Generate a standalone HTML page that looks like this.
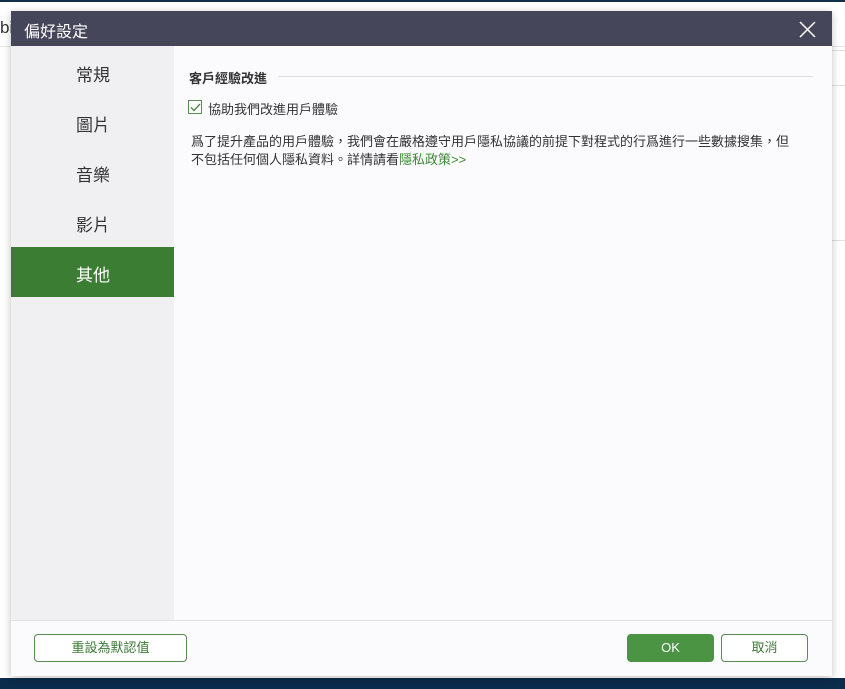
<!DOCTYPE html>
<html><head><meta charset="utf-8"><style>
*{margin:0;padding:0;box-sizing:border-box}
body{width:845px;height:689px;overflow:hidden;background:#fff;position:relative;font-family:"Liberation Sans","Noto Sans CJK TC",sans-serif}
.abs{position:absolute}
</style></head><body>
<div class="abs" style="left:0;top:0;width:845px;height:2px;background:#13304a"></div>
<div class="abs" style="left:0;top:46px;width:845px;height:1px;background:#e6e6e6"></div>
<div class="abs" style="left:832px;top:50px;width:13px;height:1px;background:#e0e0e0"></div>
<div class="abs" style="left:832px;top:85px;width:13px;height:1px;background:#e0e0e0"></div>
<div class="abs" style="left:832px;top:240px;width:13px;height:1px;background:#e0e0e0"></div>
<div class="abs" style="left:0;top:18px;font-size:17px;color:#333">bi</div>
<div class="abs" style="left:0;top:678px;width:845px;height:11px;background:#0c2c4b"></div>
<div class="abs" style="left:11px;top:11px;width:821px;height:665px;background:#fbfafd;box-shadow:0 2px 8px rgba(0,0,0,.25)">
 <div class="abs" style="left:0;top:0;width:821px;height:35px;background:#454659"></div>
 <div class="abs" style="left:13px;top:7px;font-size:16px;color:#fff">偏好設定</div>
 <svg class="abs" style="left:788px;top:10px" width="17" height="17"><path d="M1 1L16 16M16 1L1 16" stroke="#fff" stroke-width="1.5"/></svg>
 <div class="abs" style="left:0;top:35px;width:163px;height:574px;background:#f0eff2"></div>
 <div class="abs" style="left:0;top:236px;width:163px;height:50px;background:#3a7d33"></div>
 <div class="abs" style="left:65px;top:50px;font-size:17px;color:#333">常規</div>
 <div class="abs" style="left:65px;top:100px;font-size:17px;color:#333">圖片</div>
 <div class="abs" style="left:65px;top:150px;font-size:17px;color:#333">音樂</div>
 <div class="abs" style="left:65px;top:200px;font-size:17px;color:#333">影片</div>
 <div class="abs" style="left:65px;top:250px;font-size:17px;color:#fff">其他</div>
 <div class="abs" style="left:178px;top:57px;font-size:13px;font-weight:bold;color:#333">客戶經驗改進</div>
 <div class="abs" style="left:267px;top:65px;width:535px;height:1px;background:#ddd"></div>
 <div class="abs" style="left:177px;top:89px;width:14px;height:14px;border:1px solid #5a8a55;background:#fff"></div>
 <svg class="abs" style="left:179px;top:91px" width="11" height="11"><path d="M1 5.5L4 8.5L10 2" stroke="#4a8a40" stroke-width="1.4" fill="none"/></svg>
 <div class="abs" style="left:197px;top:88px;font-size:13px;color:#333">協助我們改進用戶體驗</div>
 <div class="abs" style="left:180px;top:122px;font-size:13px;color:#333;line-height:18px;width:620px">爲了提升產品的用戶體驗，我們會在嚴格遵守用戶隱私協議的前提下對程式的行爲進行一些數據搜集，但<br>不包括任何個人隱私資料。詳情請看<span style="color:#3a8a30">隱私政策&gt;&gt;</span></div>
 <div class="abs" style="left:0;top:609px;width:821px;height:1px;background:#e4e4e8"></div>
 <div class="abs" style="left:23px;top:623px;width:153px;height:28px;border:1px solid #5a8a55;border-radius:4px;font-size:13px;color:#3a7a33;text-align:center;line-height:26px;background:#fff">重設為默認值</div>
 <div class="abs" style="left:616px;top:623px;width:87px;height:28px;border-radius:4px;background:#4a9444;font-size:13px;color:#fff;text-align:center;line-height:28px">OK</div>
 <div class="abs" style="left:710px;top:623px;width:87px;height:28px;border:1px solid #5a8a55;border-radius:4px;font-size:13px;color:#3a7a33;text-align:center;line-height:26px;background:#fff">取消</div>
</div>
</body></html>
